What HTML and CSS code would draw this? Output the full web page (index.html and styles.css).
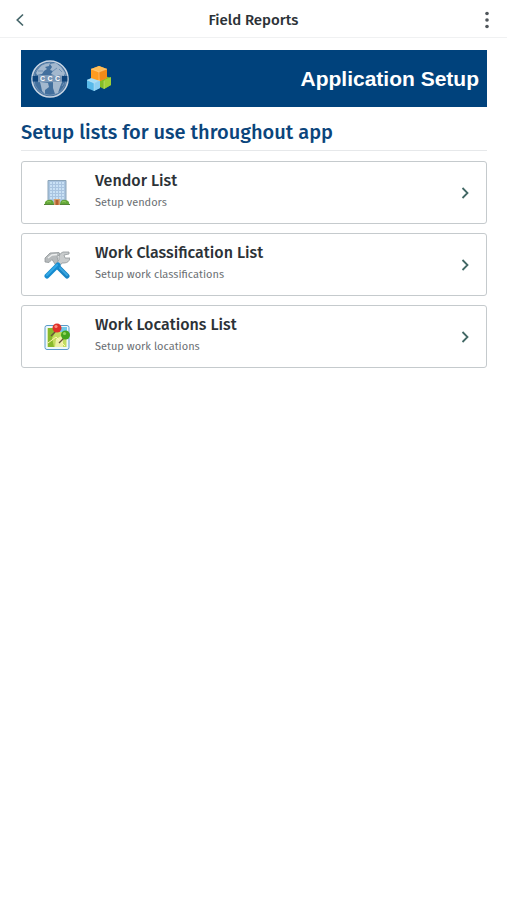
FILE: index.html
```html
<!DOCTYPE html>
<html lang="en">
<head>
<meta charset="utf-8">
<meta name="viewport" content="width=device-width, initial-scale=1">
<title>Field Reports</title>
<link rel="stylesheet" href="styles.css">
</head>
<body>
<header class="topbar">
  <button class="icon-button" type="button" aria-label="Back">
    <svg width="10" height="14" viewBox="0 0 10 14" fill="none" stroke="#46666a" stroke-width="1.7"><path d="M8 1.5 2.3 7 8 12.5"/></svg>
  </button>
  <h1 class="topbar-title">Field Reports</h1>
  <button class="icon-button" type="button" aria-label="More options">
    <svg width="4" height="18" viewBox="0 0 4 18" fill="#50565b"><circle cx="2" cy="2.5" r="1.8"/><circle cx="2" cy="9" r="1.8"/><circle cx="2" cy="15.5" r="1.8"/></svg>
  </button>
</header>
<main class="content">
  <section class="banner">
    <svg class="globe" width="38" height="38" viewBox="0 0 38 38">
      <circle cx="19" cy="19" r="18" fill="#426f9d" stroke="#c9d5e3" stroke-width="1.6"/>
      <circle cx="19" cy="19" r="16.2" fill="none" stroke="#7797b8" stroke-width=".8"/>
      <path d="M5 13Q8 6 14 4l5-1-1 3-4 1 2 2-3 2-2 3-5 1zM19 4l6-1 5 4 4 6-1 3-5-1-3 1-5-2 2-3-3-1 2-3zM9 22l8 1 1 4-4 3v4l-3-3-1-5zM22 22l9 0-2 5-2 6-3 1-2-6z" fill="#a3b8ce"/>
      <path d="M7 11h5M22 11l4-3M28 9l3 3M31 26l2-3" stroke="#6f91b5" fill="none"/>
      <path d="M1.600 16h34.800v5.500H1.600z" fill="#0d437a"/>
      <path d="M7 16h24v5.500H7z" fill="#7895b5"/>
      <path d="M7 15.700h24M7 21.700h24" stroke="#c9d5e3" stroke-width=".5"/>
      <text x="9 16.500 24" y="21.300" class="globe-text">CCC</text>
    </svg>
    <svg class="cubes" width="26" height="26" viewBox="0 0 26 26" stroke-linejoin="round">
      <path d="m12 13 7-3 6 2v7l-7 4-6-3z" fill="#83bd25"/><path d="m18 14 7-3v8l-7 4z" fill="#a0cf35"/>
      <path d="m1 14 7-3 6 3v8l-6 3-7-3z" fill="#58b9e9"/><path d="m1 14 7-3 6 3-6 3z" fill="#a5ddf7"/><path d="m8 17 6-3v8l-6 3z" fill="#8ccff2"/>
      <path d="m5 3 8-3 8 3v9l-7 3-9-3z" fill="#ff9b20"/><path d="m5 3 8-3 8 3-8 3z" fill="#ffbd58"/><path d="m13 6 8-3v9l-7 3z" fill="#f28a18"/>
      <path d="m5 3 8 3 8-3M13 6v9M1 14l7 3 6-3M8 17v8M18 15v8" fill="none" stroke="#fff" stroke-opacity=".4" stroke-width=".7"/>
    </svg>
    <h2 class="banner-title">Application Setup</h2>
  </section>
  <h2 class="section-title">Setup lists for use throughout app</h2>
  <nav class="list" aria-label="Setup lists">
    <a class="card" href="#vendors">
      <svg class="card-icon" width="26" height="28" viewBox="0 0 26 28">
        <path d="M4 1.500h18V25H4z" fill="#a9c4e0" stroke="#8ca5b9"/>
        <path d="M6 4h14M6 7h14M6 10h14M6 13h14M6 16h14M6 19h14" stroke="#c9e1f5" stroke-width="2" stroke-dasharray="2 1"/>
        <path d="M10 20h6v6h-6z" fill="#d6a070"/><path d="M11.500 21h3v5h-3z" fill="#b5602f"/>
        <path d="M1 26q-1-4 3-5 6-1 6 5zM16 26q0-6 6-5 4 1 3 5z" fill="#63a638"/>
        <path d="M3 23q2-1 4 0M18 23q2-1 4 0" stroke="#91c85e" fill="none"/>
        <path d="M0 25.500h10M16 25.500h10" stroke="#568538"/>
      </svg>
      <span class="card-text"><span class="card-title">Vendor List</span><span class="card-note">Setup vendors</span></span>
      <svg class="chevron" width="8" height="12" viewBox="0 0 8 12"><path d="m1.500 1 5 5-5 5"/></svg>
    </a>
    <a class="card" href="#classifications">
      <svg class="card-icon" width="26" height="28" viewBox="0 0 26 28">
        <path d="M1 11 1 7l5-5 9-.5 1 2-3 2 2 7-3 2-4-6-3 3z" fill="#b6babc" stroke="#8f9598" stroke-width=".8"/>
        <path d="M11 14 15 9q-1-6 4-8h6v2l-5 1 1 3 5 0q-1 5-6 5h-2l-4 5z" fill="#c9cccd" stroke="#92989b" stroke-width=".8"/>
        <path d="m4 7 4-3 5-.5" stroke="#eceeee" fill="none" stroke-width="1.500"/>
        <path d="m15 17 8 8" stroke="#1984c4" stroke-width="5" stroke-linecap="round"/>
        <path d="m16 17 7 7" stroke="#39a5df" stroke-width="2" stroke-linecap="round"/>
        <path d="M14 14 3 25" stroke="#168bcf" stroke-width="5" stroke-linecap="round"/>
        <path d="M13 14 3 24" stroke="#35a8e5" stroke-width="2" stroke-linecap="round"/>
      </svg>
      <span class="card-text"><span class="card-title">Work Classification List</span><span class="card-note">Setup work classifications</span></span>
      <svg class="chevron" width="8" height="12" viewBox="0 0 8 12"><path d="m1.500 1 5 5-5 5"/></svg>
    </a>
    <a class="card" href="#locations">
      <svg class="card-icon" width="26" height="28" viewBox="0 0 26 28">
        <rect x="1" y="2.500" width="24" height="24" rx="2" fill="#eef7fc" stroke="#5a9bc9"/>
        <path d="M3.500 5h19v19h-19z" fill="#c2dc60"/><path d="M4 5h5l2 5-3 5 2 9H4z" fill="#88b92c"/>
        <path d="m12 16 7-4v12h-8z" fill="#edf0a7"/><path d="m4 20 8-6 9 9" stroke="#fff6b0" fill="none"/>
        <path d="M16 4h7v5h-7z" fill="#6fc8e8"/>
        <path d="m12 8-5 5M20 15l-5 5" stroke="#69503a" stroke-width="1.300"/>
        <circle cx="13" cy="5" r="4.500" fill="#df3029"/><circle cx="12" cy="3.500" r="1.600" fill="#ff8c7c"/>
        <circle cx="21.500" cy="12" r="4.500" fill="#43a41d"/><circle cx="20.500" cy="10.500" r="1.600" fill="#93d65b"/>
      </svg>
      <span class="card-text"><span class="card-title">Work Locations List</span><span class="card-note">Setup work locations</span></span>
      <svg class="chevron" width="8" height="12" viewBox="0 0 8 12"><path d="m1.500 1 5 5-5 5"/></svg>
    </a>
  </nav>
</main>
</body>
</html>
```

FILE: styles.css
```css
* {
  box-sizing: border-box;
}

body {
  margin: 0;
  background: #fff;
  color: #2c3237;
  font-family: "Fira Sans", "Noto Sans", sans-serif;
}

h1,
h2 {
  margin: 0;
}

.topbar {
  display: grid;
  grid-template-columns: 40px 1fr 40px;
  align-items: center;
  height: 38px;
  padding-top: 2px;
  border-bottom: 1px solid #f0f1f2;
}

.topbar-title {
  font-size: 15px;
  line-height: 20px;
  font-weight: 500;
  text-align: center;
}

.icon-button {
  display: flex;
  justify-content: center;
  align-items: center;
  height: 32px;
  padding: 0;
  border: 0;
  background: none;
}

.content {
  padding: 12px 20px 20px 21px;
}

.banner {
  display: flex;
  align-items: center;
  height: 57px;
  padding: 0 8px 0 10px;
  background: #00427c;
  color: #fff;
}

.globe-text {
  font: bold 7px "Liberation Sans", sans-serif;
  fill: #fff;
}

.cubes {
  margin-left: 17px;
}

.banner-title {
  margin-left: auto;
  font: bold 21px/28px "Liberation Sans", Arial, sans-serif;
}

.section-title {
  margin-bottom: 10px;
  padding: 11px 0 4px;
  border-bottom: 1px solid #e6e8ea;
  color: #0b457c;
  font-size: 20px;
  line-height: 28px;
  font-weight: 500;
}

.list {
  display: flex;
  flex-direction: column;
  gap: 9px;
}

.card {
  display: flex;
  align-items: center;
  height: 63px;
  padding: 0 17px 0 22px;
  border: 1px solid #c5cacd;
  border-radius: 3px;
  color: inherit;
  text-decoration: none;
}

.card-text {
  display: flex;
  flex: 1;
  flex-direction: column;
  gap: 2px;
  margin-left: 25px;
  padding-bottom: 3px;
}

.card-title {
  font-size: 16px;
  line-height: 22px;
  font-weight: 500;
}

.card-note {
  color: #6b6f73;
  font-size: 11px;
  line-height: 18px;
}

.chevron {
  fill: none;
  stroke: #426865;
  stroke-width: 1.8;
}
```
